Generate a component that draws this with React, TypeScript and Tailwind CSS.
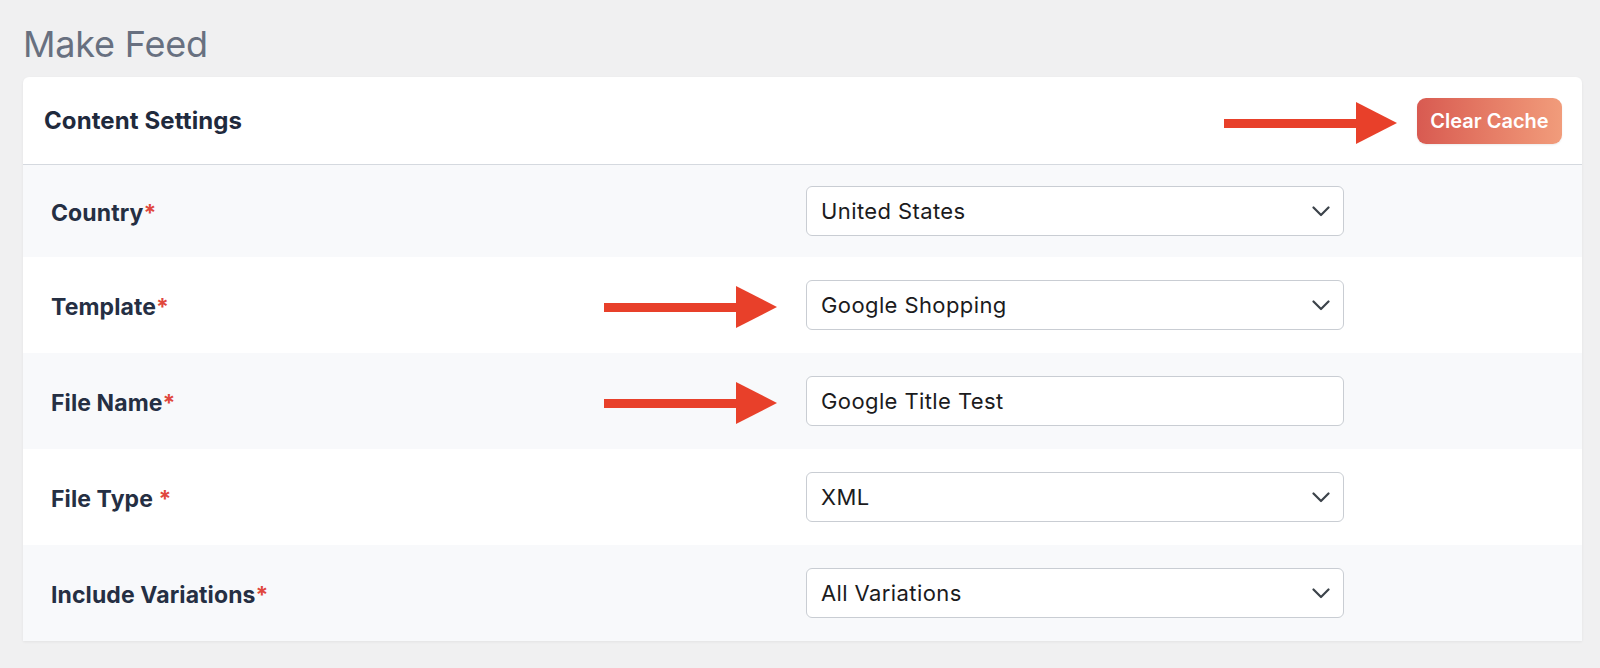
import React from "react";

const Arrow = () => (
  <svg width="173" height="42" viewBox="0 0 173 42" className="block">
    <rect x="0" y="17" width="133" height="9" fill="#e8402a" />
    <polygon points="132,0 173,21 132,42" fill="#e8402a" />
  </svg>
);

const Chevron = () => (
  <svg width="18" height="11" viewBox="0 0 18 11" className="block">
    <path d="M1.5 1.5 L9 9 L16.5 1.5" fill="none" stroke="#3c434a" strokeWidth="2.2" strokeLinecap="round" strokeLinejoin="round" />
  </svg>
);

type Row = { label: string; value: string; select: boolean; spaced?: boolean; arrow?: boolean; h: string; bg: string };

const rows: Row[] = [
  { label: "Country", value: "United States", select: true, h: "h-[92px]", bg: "bg-[#f8f9fb]" },
  { label: "Template", value: "Google Shopping", select: true, arrow: true, h: "h-[96px]", bg: "bg-white" },
  { label: "File Name", value: "Google Title Test", select: false, arrow: true, h: "h-[96px]", bg: "bg-[#f8f9fb]" },
  { label: "File Type", value: "XML", select: true, spaced: true, h: "h-[96px]", bg: "bg-white" },
  { label: "Include Variations", value: "All Variations", select: true, h: "h-[96px]", bg: "bg-[#f8f9fb]" },
];

export default function App() {
  return (
    <div className="min-h-screen bg-[#f0f0f1] pb-[27px]" style={{ fontFamily: "Inter, 'Noto Sans', sans-serif" }}>
      <h1 className="pl-[23px] pt-[24px] text-[36px] leading-[40px] font-normal text-[#687080] tracking-[-0.2px]">Make Feed</h1>
      <div className="mt-[13px] ml-[23px] mr-[18px] bg-white rounded-t-[6px] shadow-[0_1px_3px_rgba(0,0,0,0.06)] overflow-hidden">
        <div className="h-[88px] border-b border-[#d5d9df] flex items-center justify-between pl-[21px] pr-[20px]">
          <span className="text-[24px] font-bold text-[#1f2a3d] tracking-[0.1px]">Content Settings</span>
          <div className="flex items-center gap-[20px]">
            <div className="mt-[4px]"><Arrow /></div>
            <button className="w-[145px] h-[46px] rounded-[9px] bg-gradient-to-r from-[#d85a51] to-[#f19c7b] text-white text-[20px] font-semibold shadow-[0_1px_2px_rgba(0,0,0,0.08)]">
              Clear Cache
            </button>
          </div>
        </div>
        {rows.map((r) => (
          <div key={r.label} className={`relative ${r.h} ${r.bg} grid grid-cols-[783px_538px] items-center`}>
            <div className="pl-[28px] pt-[4px] text-[23px] font-bold text-[#252f43] tracking-[0.1px]">
              {r.label}
              {r.spaced ? " " : ""}
              <span className="text-[#e0473d]">*</span>
            </div>
            <div className="h-[50px] rounded-[6px] border border-[#c9cdd3] bg-white flex items-center justify-between pl-[14px] pr-[13px]">
              <span className="text-[22px] text-[#1b1b1d] tracking-[0.4px] pt-[1px]">{r.value}</span>
              {r.select && <Chevron />}
            </div>
            {r.arrow && (
              <div className="absolute left-[581px] top-[29px]">
                <Arrow />
              </div>
            )}
          </div>
        ))}
      </div>
    </div>
  );
}
